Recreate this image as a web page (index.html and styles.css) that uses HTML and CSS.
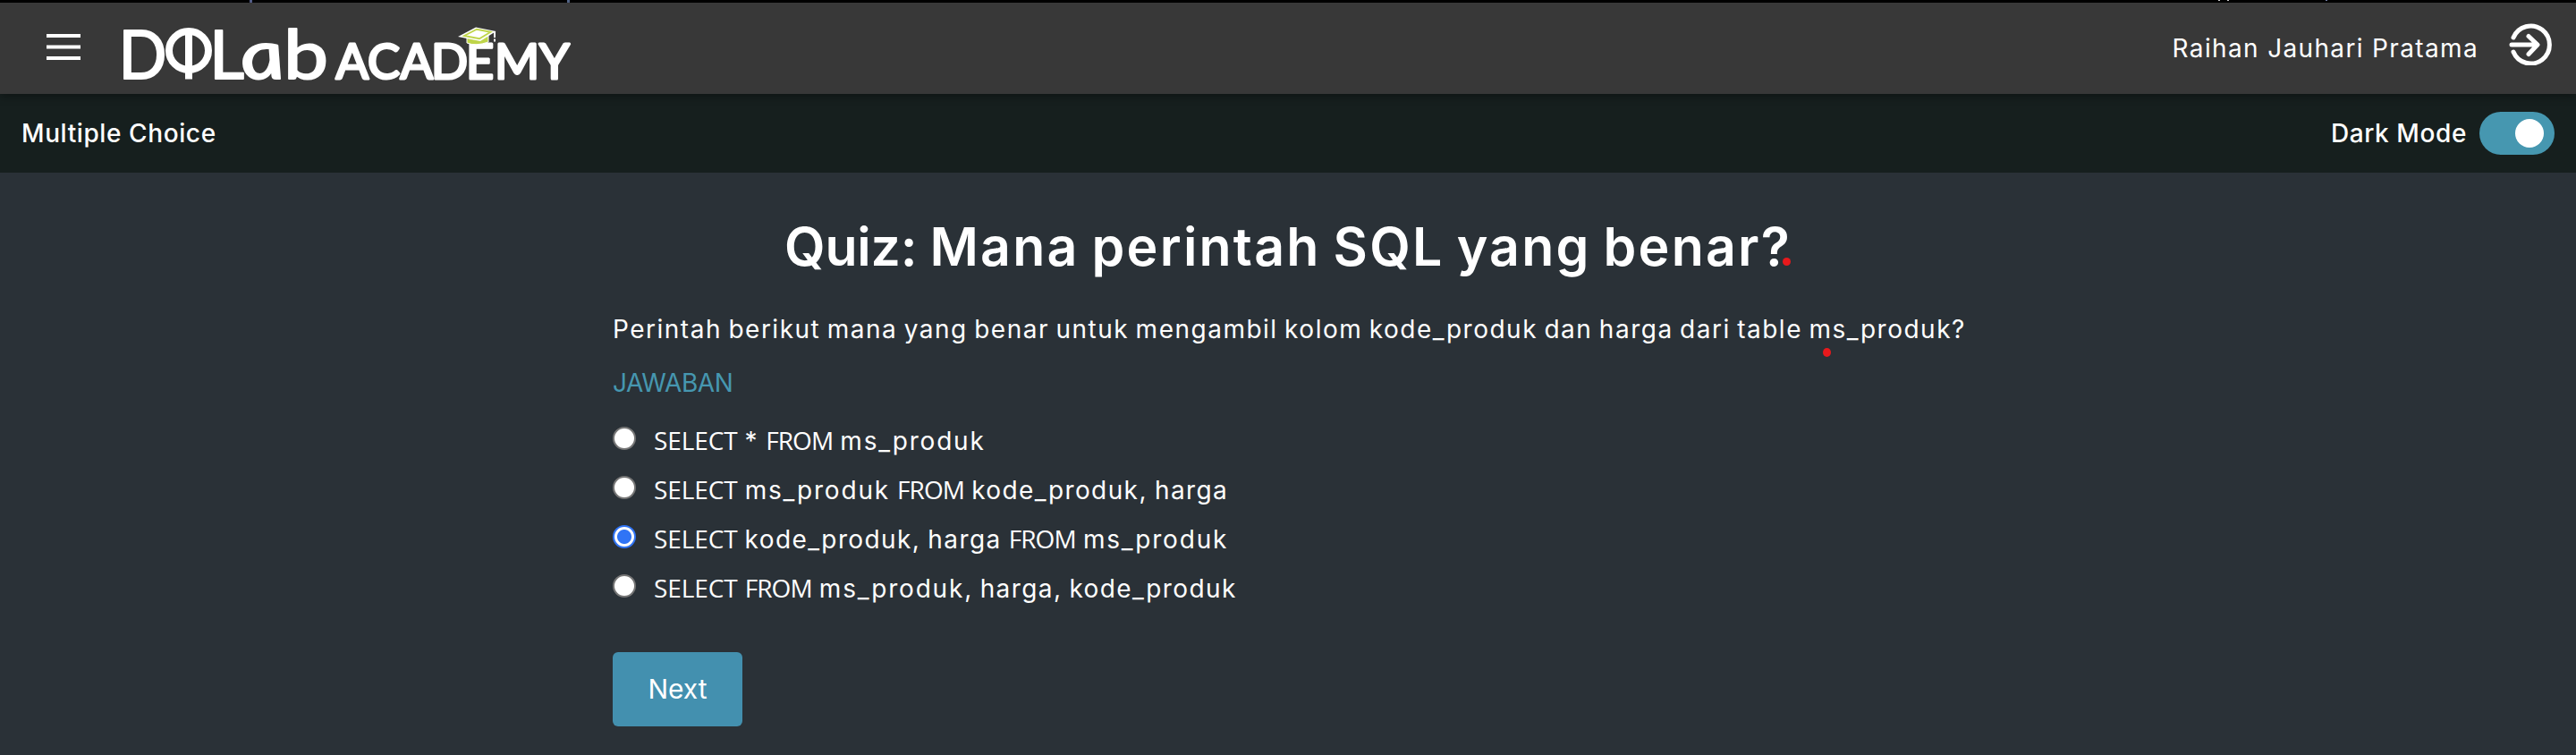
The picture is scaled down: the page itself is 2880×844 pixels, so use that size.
FILE: index.html
```html
<!DOCTYPE html>
<html lang="id">
<head>
<meta charset="utf-8">
<title>DQLab Academy</title>
<link rel="stylesheet" href="styles.css">
</head>
<body>
<div class="strip"></div>
<header class="topbar">
  <div class="topbar-left">
    <svg class="menu" width="38" height="30" viewBox="0 0 38 30"><path d="M0 2h38M0 14.5h38M0 27h38" stroke="#fff" stroke-width="4"/></svg>
    <svg class="logo" width="530" height="104" viewBox="124 4 530 104" role="img" aria-label="DQLab Academy">
      <g class="logo-text logo-big">
        <text x="132.500" y="87.500" textLength="54" lengthAdjust="spacingAndGlyphs">D</text>
        <text x="234" y="87.500">L</text>
        <text class="upright" transform="translate(273.500 87.500) skewX(13)" textLength="49" lengthAdjust="spacingAndGlyphs">a</text>
        <text x="317" y="87.500" textLength="50" lengthAdjust="spacingAndGlyphs">b</text>
      </g>
      <ellipse cx="211" cy="56.500" rx="22" ry="21.500" fill="none" stroke="#fff" stroke-width="8"/>
      <rect x="207" y="35" width="8" height="53.500" fill="#fff"/>
      <text class="logo-text logo-small" x="375.500 411 447.500 482 521 553 603" y="87.500">ACADEMY</text>
      <path d="M522 42v6q10 4 24-1v-7z" fill="#bfd54a" stroke="#fff" stroke-width="1"/>
      <path d="M512 41L532 30.500L554.500 35L537 46z" fill="#fff"/>
      <path d="M519 40L533 32.800L548.500 35.800L536 43.200z" fill="#fff" stroke="#bfd54a" stroke-width="1.800"/>
      <path d="M553 35v7M553 43.500v3" stroke="#fff" stroke-width="2"/>
    </svg>
  </div>
  <div class="topbar-right">
    <span class="user">Raihan Jauhari Pratama</span>
    <svg class="logout" width="48" height="48" viewBox="0 0 48 48"><path d="M5 17A21 21 0 1 1 5 33M3 25H31M22 15.500L32 25L22 35.500" fill="none" stroke="#fff" stroke-width="5" stroke-linecap="round" stroke-linejoin="round"/></svg>
  </div>
</header>
<div class="subbar">
  <span class="kind">Multiple Choice</span>
  <div class="mode"><span class="mode-label">Dark Mode</span><span class="toggle"><span class="knob"></span></span></div>
</div>
<main class="quiz">
  <h1 class="title"><span class="title-text"><span class="title-lead">Quiz:</span> Mana perintah SQL yang benar?<i class="dot dot-title"></i></span></h1>
  <p class="question"><span class="question-text">Perintah berikut mana yang benar untuk mengambil kolom kode_produk dan harga dari table ms_produk?<i class="dot dot-question"></i></span></p>
  <div class="answer-label">JAWABAN</div>
  <div class="options">
    <label class="option"><span class="radio"></span><span><b class="kw">SELECT</b> * <b class="kw from">FROM</b> <span class="table">ms_produk</span></span></label>
    <label class="option"><span class="radio"></span><span><b class="kw">SELECT</b> <span class="table">ms_produk</span> <b class="kw from">FROM</b> kode_produk, harga</span></label>
    <label class="option"><span class="radio checked"></span><span><b class="kw">SELECT</b> kode_produk, harga <b class="kw from">FROM</b> <span class="table">ms_produk</span></span></label>
    <label class="option"><span class="radio"></span><span><b class="kw">SELECT</b> <b class="kw from">FROM</b> <span class="table">ms_produk</span>, harga, kode_produk</span></label>
  </div>
  <button class="next">Next</button>
</main>
</body>
</html>
```
FILE: styles.css
```css
* { box-sizing: border-box; }
body {
  margin: 0;
  height: 844px;
  overflow: hidden;
  background: #2a3137;
  color: #fff;
  font-family: Inter, "Open Sans", sans-serif;
  font-size: 28px;
  line-height: 40px;
  white-space: nowrap;
}
.strip {
  height: 3px;
  background:
    linear-gradient(#5b6594, #5b6594) 279px 0 / 3px 3px no-repeat,
    linear-gradient(#5b6f94, #5b6f94) 634px 0 / 3px 3px no-repeat,
    linear-gradient(#ddd, #ddd) 2480px 0 / 2px 1px no-repeat,
    linear-gradient(#ddd, #ddd) 2490px 0 / 2px 1px no-repeat,
    linear-gradient(#7a86b0, #7a86b0) 2600px 0 / 2px 1px no-repeat,
    #000;
}
.topbar {
  position: relative;
  display: flex;
  justify-content: space-between;
  height: 102px;
  background: #383838;
  box-shadow: 0 2px 10px rgba(0, 0, 0, .4);
}
.topbar-left { display: flex; padding-left: 52px; gap: 34px; }
.menu { margin-top: 35px; }
.logo { margin-top: 1px; overflow: visible; }
.logo-text { font-family: Lato, sans-serif; fill: #fff; stroke: #fff; stroke-linejoin: round; }
.logo-big { font-size: 76px; stroke-width: 2px; }
.upright { font-style: italic; }
.logo-small { font-size: 54px; stroke-width: 3px; }
.topbar-right { display: flex; padding-right: 27px; gap: 34px; }
.user { margin-top: 31px; letter-spacing: 1.35px; }
.logout { margin-top: 22px; }
.subbar {
  display: flex;
  align-items: center;
  justify-content: space-between;
  height: 88px;
  padding: 0 24px;
  background: #161f1e;
  font-weight: 500;
  letter-spacing: .6px;
}
.mode { display: flex; align-items: center; gap: 14px; }
.toggle {
  display: flex;
  width: 84px;
  height: 48px;
  padding: 8px 12px;
  justify-content: flex-end;
  border-radius: 24px;
  background: #4697b0;
}
.knob { width: 32px; height: 32px; border-radius: 50%; background: #fff; }
.quiz { width: 1510px; margin: 0 auto; padding-top: 39px; }
.title { margin: 0; font-size: 59px; line-height: 88px; font-weight: 600; text-align: center; letter-spacing: 2.2px; word-spacing: -3px; }
.title-lead { letter-spacing: -.2px; }
.title-text, .question-text { position: relative; }
.question { margin: 28px 0 0; letter-spacing: 1.5px; word-spacing: -1.9px; }
.dot { position: absolute; border-radius: 50%; background: #e8191c; }
.dot-title { width: 9px; height: 9px; right: 1px; bottom: 14px; }
.dot-question { width: 9px; height: 10px; right: 151px; bottom: -14px; }
.answer-label { margin-top: 20px; color: #4697b0; letter-spacing: -.4px; }
.options { margin-top: 18px; }
.option { display: flex; height: 55px; padding-top: 7px; gap: 20px; letter-spacing: 1.4px; word-spacing: -1.2px; }
.kw { font-family: "Open Sans", sans-serif; font-weight: 400; line-height: 1; letter-spacing: -.1px; }
.from { letter-spacing: -.9px; }
.table { letter-spacing: 1.8px; }
.radio {
  width: 26px;
  height: 26px;
  margin-top: 4px;
  border: 2px solid #767676;
  border-radius: 50%;
  background: #fff;
}
.checked { border-color: #3074f5; background: radial-gradient(circle, #3074f5 7.500px, #fff 8.500px); }
.next {
  display: block;
  width: 145px;
  height: 83px;
  margin-top: 43px;
  padding: 0 0 2px;
  border: 0;
  border-radius: 6px;
  background: #4390af;
  color: #fff;
  font: 30px Inter, sans-serif;
}
```
